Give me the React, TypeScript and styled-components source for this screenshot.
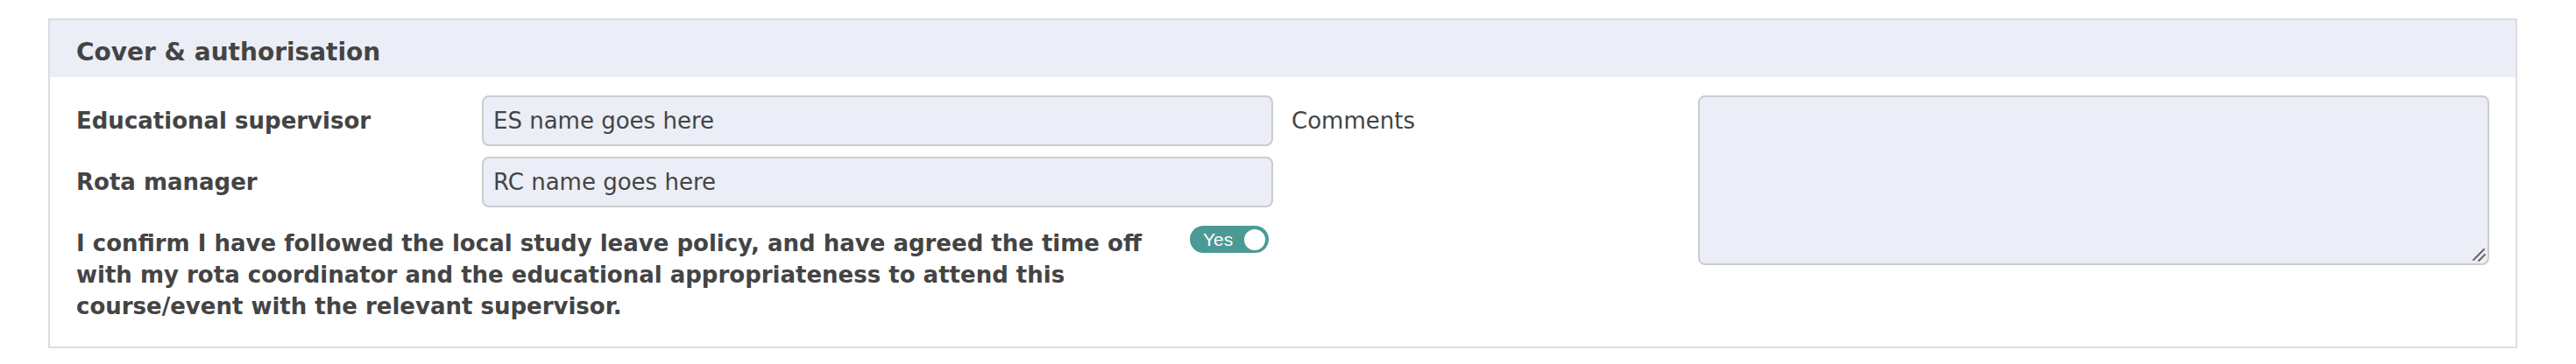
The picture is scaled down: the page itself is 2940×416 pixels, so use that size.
import React, { useState } from "react";
import styled, { createGlobalStyle } from "styled-components";

const GlobalStyle = createGlobalStyle`
  * { box-sizing: border-box; }
  body {
    margin: 0;
    background: #fff;
    font-family: Verdana, "DejaVu Sans", sans-serif;
    color: #444;
  }
`;

const Panel = styled.section`
  margin: 21px 67px 0 55px;
  border: 2px solid #ddd;
  background: #fff;
`;

const PanelHeader = styled.header`
  height: 65px;
  padding: 17px 30px 0;
  background: #ebeef6;
`;

const PanelTitle = styled.h2`
  margin: 0;
  font-size: 28px;
  line-height: 40px;
  font-weight: bold;
  color: #444;
`;

const PanelBody = styled.div`
  display: grid;
  grid-template-columns: 1366px 1fr;
  column-gap: 21px;
  padding: 21px 30px 28px;
`;

const Column = styled.div`
  display: flex;
  flex-direction: column;
`;

const FieldGrid = styled.div`
  display: grid;
  grid-template-columns: 463px 1fr;
  row-gap: 12px;
  align-items: center;
`;

const Label = styled.label<{ $bold?: boolean }>`
  font-size: 26px;
  line-height: ${(p) => (p.$bold ? "36px" : "58px")};
  font-weight: ${(p) => (p.$bold ? "bold" : "normal")};
  color: #444;
  align-self: ${(p) => (p.$bold ? "center" : "start")};
`;

const TextInput = styled.input`
  width: 100%;
  height: 58px;
  padding: 0 11px;
  border: 2px solid #ccc;
  border-radius: 8px;
  background: #ebeef6;
  font-family: inherit;
  font-size: 26px;
  color: #444;
  outline: none;
`;

const ConfirmRow = styled.div`
  display: flex;
  align-items: flex-start;
  margin-top: 23px;
`;

const ConfirmText = styled.p`
  margin: 0;
  max-width: 1250px;
  font-size: 26px;
  line-height: 36px;
  font-weight: bold;
  color: #444;
`;

const Switch = styled.button<{ $on: boolean }>`
  display: inline-flex;
  align-items: center;
  justify-content: space-between;
  flex-shrink: 0;
  width: 90px;
  height: 31px;
  margin: -2px 5px 0 auto;
  padding: 0 4px 0 15px;
  border: none;
  border-radius: 16px;
  background: ${(p) => (p.$on ? "#4b9a96" : "#bbb")};
  cursor: pointer;
`;

const SwitchText = styled.span`
  font-family: "Liberation Sans", Arial, sans-serif;
  font-size: 21px;
  line-height: 1;
  color: #fff;
`;

const Knob = styled.span`
  width: 24px;
  height: 24px;
  border-radius: 50%;
  background: #fff;
`;

const CommentsGrid = styled.div`
  display: grid;
  grid-template-columns: 464px 1fr;
  align-items: start;
`;

const AreaWrap = styled.div`
  position: relative;
`;

const CommentArea = styled.textarea`
  display: block;
  width: 100%;
  height: 194px;
  padding: 11px;
  border: 2px solid #ccc;
  border-radius: 8px;
  background: #ebeef6;
  font-family: inherit;
  font-size: 26px;
  color: #444;
  resize: none;
  outline: none;
`;

const Grip = styled.svg`
  position: absolute;
  right: 3px;
  bottom: 3px;
  pointer-events: none;
`;

const App = () => {
  const [confirmed, setConfirmed] = useState<boolean>(true);

  return (
    <>
      <GlobalStyle />
      <Panel>
        <PanelHeader>
          <PanelTitle>Cover &amp; authorisation</PanelTitle>
        </PanelHeader>
        <PanelBody>
          <Column>
            <FieldGrid>
              <Label $bold>Educational supervisor</Label>
              <TextInput defaultValue="ES name goes here" />
              <Label $bold>Rota manager</Label>
              <TextInput defaultValue="RC name goes here" />
            </FieldGrid>
            <ConfirmRow>
              <ConfirmText>
                I confirm I have followed the local study leave policy, and have
                agreed the time off with my rota coordinator and the educational
                appropriateness to attend this course/event with the relevant
                supervisor.
              </ConfirmText>
              <Switch
                role="switch"
                aria-checked={confirmed}
                $on={confirmed}
                onClick={() => setConfirmed(!confirmed)}
              >
                <SwitchText>{confirmed ? "Yes" : "No"}</SwitchText>
                <Knob />
              </Switch>
            </ConfirmRow>
          </Column>
          <CommentsGrid>
            <Label>Comments</Label>
            <AreaWrap>
              <CommentArea />
              <Grip width="16" height="16" viewBox="0 0 16 16">
                <path
                  d="M1 13 L13 1 M7 14 L14 7"
                  stroke="#666"
                  strokeWidth="2"
                  strokeLinecap="round"
                  fill="none"
                />
              </Grip>
            </AreaWrap>
          </CommentsGrid>
        </PanelBody>
      </Panel>
    </>
  );
};

export default App;
